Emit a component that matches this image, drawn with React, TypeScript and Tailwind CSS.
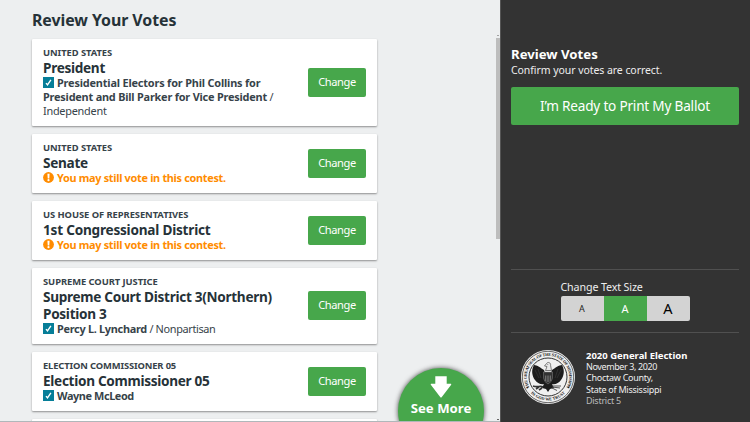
import type { ReactNode } from "react";

function ChangeButton() {
  return (
    <button className="h-[29px] w-[58px] shrink-0 rounded-[2px] bg-[#47a74b] pb-px text-[11.1px] leading-[28px] tracking-[-0.4px] text-white">
      Change
    </button>
  );
}

function Check() {
  return (
    <svg viewBox="0 0 11 11" className="mr-[3px] inline-block h-[11px] w-[11px] align-[-1px]">
      <rect width="11" height="11" fill="#067e98" />
      <path d="M3 6.1 L4.5 7.8 L7.9 2.9" fill="none" stroke="white" strokeWidth="1.4" />
    </svg>
  );
}

function Warning() {
  return (
    <svg viewBox="0 0 11 11" className="mr-[3px] inline-block h-[11px] w-[11px] align-[-1px]">
      <circle cx="5.5" cy="5.5" r="5.4" fill="#ff8c00" />
      <path d="M4.4 1.8h2.2l-.3 4.6h-1.6z" fill="white" />
      <circle cx="5.5" cy="8.2" r="1.1" fill="white" />
    </svg>
  );
}

function Card({ label, title, children }: { label: ReactNode; title: ReactNode; children: ReactNode }) {
  return (
    <section className="flex w-[345px] shrink-0 items-center justify-between rounded-[1px] bg-white pr-[11px] pb-2 pl-[11px] pt-[7px] shadow-[0_1px_2px_rgba(0,0,0,0.4)]">
      <div className="whitespace-nowrap text-[#263238]">
        <div className="text-[9.4px] font-bold leading-[13px] tracking-[-0.06px] text-[#37434a]">{label}</div>
        <h2 className="text-[13.6px] font-bold leading-[17px] tracking-[-0.3px]">{title}</h2>
        <div className="text-[10.9px] leading-[14px] tracking-[-0.25px] text-[#37434a]">{children}</div>
      </div>
      <ChangeButton />
    </section>
  );
}

function Undervote() {
  return (
    <div className="font-bold tracking-[-0.31px] text-[#ff8c00]">
      <Warning />
      You may still vote in this contest.
    </div>
  );
}

function Seal() {
  return (
    <svg viewBox="0 0 54 54" className="h-[54px] w-[54px] shrink-0">
      <defs>
        <path id="seal-top" d="M9.1 38.4 A21.2 21.2 0 1 1 44.9 38.4" />
        <path id="seal-bottom" d="M8.5 41.5 A23.5 23.5 0 0 0 45.5 41.5" />
      </defs>
      <circle cx="27" cy="27" r="27" fill="#f0f0f0" />
      <circle cx="27" cy="27" r="25.7" fill="none" stroke="#444" strokeWidth=".8" />
      <circle cx="27" cy="27" r="19" fill="none" stroke="#333" strokeWidth="1" />
      <text fontSize="4.2" fontWeight="700" fill="#111" fontFamily="Liberation Serif, serif">
        <textPath href="#seal-top" textLength="88" startOffset="1">THE GREAT SEAL OF THE STATE OF MISSISSIPPI</textPath>
      </text>
      <text fontSize="4.2" fontWeight="700" fill="#111" fontFamily="Liberation Serif, serif">
        <textPath href="#seal-bottom" startOffset="50%" textAnchor="middle">IN GOD WE TRUST</textPath>
      </text>
      <circle cx="6.6" cy="37.5" r=".8" fill="#222" />
      <circle cx="47.4" cy="37.5" r=".8" fill="#222" />
      <path d="M23 20 C20 18 16 15 13 15 C10 20 11 26 14 30 C16 33 20 35 23 34 L21 38 L25 39 L27 42 L29 39 L33 38 L31 34 C34 35 38 33 40 30 C43 26 44 20 41 15 C38 15 34 18 31 20 L30 23 H24 Z" fill="#1d1d1d" />
      <path d="M25.5 13.5 C27 11.5 30 12.5 29.6 15.5 L30.5 20.5 H24.5 L26 16.5 L23.5 16 Z" fill="#e8e8e8" stroke="#333" strokeWidth=".6" />
      <circle cx="26.8" cy="14.4" r=".45" fill="#222" />
      <path d="M22.5 22 H31.5 V28 Q31 32 27 34 Q23 32 22.5 28 Z" fill="#333" stroke="#888" strokeWidth=".5" />
      <path d="M24.5 25.5 V31 M26.2 25.5 V32 M27.8 25.5 V32 M29.5 25.5 V31" stroke="#999" strokeWidth=".6" />
      <path d="M14 20 L18 28 M17 19 L20 28 M40 20 L36 28 M37 19 L34 28" stroke="#444" strokeWidth=".5" />
      <path d="M22 37 C19 35 17 38 12 36 M18 37 L15 39 M21 38 L18 40" fill="none" stroke="#333" strokeWidth="1.6" />
      <path d="M31 37 L39 38 M32 36 L40 36 M31 38 L36 40.5" fill="none" stroke="#444" strokeWidth=".9" />
    </svg>
  );
}

export default function App() {
  return (
    <div className="flex h-[422px] w-[750px] overflow-hidden bg-[#edeff0] font-['Noto_Sans',sans-serif]">
      <main className="relative h-[422px] w-[500px] overflow-hidden border-b border-[#b0b7ba]">
        <div className="flex h-full">
          <div className="flex flex-1 flex-col pl-8">
            <h1 className="h-[39px] shrink-0 whitespace-nowrap pt-[10px] text-[15.9px] font-bold leading-5 tracking-[-0.05px] text-[#263238]">
              Review Your Votes
            </h1>
            <div className="flex flex-col gap-2">
              <Card label="UNITED STATES" title="President">
                <div className="font-bold tracking-[-0.17px]">
                  <Check />
                  Presidential Electors for Phil Collins for
                </div>
                <div>
                  <b className="tracking-[-0.2px]">President and Bill Parker for Vice President</b> /
                </div>
                <div>Independent</div>
              </Card>
              <Card label="UNITED STATES" title="Senate">
                <Undervote />
              </Card>
              <Card label="US HOUSE OF REPRESENTATIVES" title={<span className="tracking-[-0.22px]">1st Congressional District</span>}>
                <Undervote />
              </Card>
              <Card label="SUPREME COURT JUSTICE" title={<>Supreme Court District 3(Northern)<br />Position 3</>}>
                <Check />
                <b className="tracking-[-0.28px]">Percy L. Lynchard</b>
                <span className="tracking-[-0.35px]"> / Nonpartisan</span>
              </Card>
              <Card label={<span className="tracking-[-0.14px]">ELECTION COMMISSIONER 05</span>} title="Election Commissioner 05">
                <Check />
                <b className="tracking-[-0.4px]">Wayne McLeod</b>
              </Card>
              <section className="h-[59px] w-[345px] shrink-0 rounded-[1px] bg-white shadow-[0_1px_2px_rgba(0,0,0,0.4)]" />
            </div>
          </div>
          <div className="flex h-full w-1 flex-col items-center pt-[35px]">
            <div className="mb-[2px] h-px w-[2px] bg-[#a3a3a3]" />
            <div className="h-[201px] w-full bg-[#bdbdbd]" />
            <div className="mb-px mt-auto h-px w-[2px] bg-[#666]" />
          </div>
        </div>
        <button className="absolute left-[398px] top-[368px] flex h-[86px] w-[86px] flex-col items-center rounded-full bg-[#47a74b] pt-2 text-white shadow-[0_0_5px_rgba(0,0,0,0.7)]">
          <svg viewBox="0 0 22 22" className="h-[22px] w-[22px]">
            <path d="M5.3 .3h11.4V7.7h4q1.2 0 .3 1.2L11.8 21q-.8 1-1.6 0L1 8.9Q.1 7.7 1.3 7.7h4z" fill="white" />
          </svg>
          <span className="mt-[2px] whitespace-nowrap text-[13.2px] font-bold leading-[17px]">See More</span>
        </button>
      </main>
      <aside className="flex h-[422px] w-[250px] flex-col border-l border-[#555] bg-[#333] pl-[10px] pr-[11px] text-white">
        <div className="pt-[46px]">
          <h2 className="whitespace-nowrap text-[13.2px] font-bold leading-[17px]">Review Votes</h2>
          <p className="whitespace-nowrap text-[10.5px] leading-[14px] tracking-[-0.06px] text-[#eee]">Confirm your votes are correct.</p>
          <button className="mt-[10px] h-[38px] w-full whitespace-nowrap rounded-[2px] bg-[#47a74b] text-[13.6px] tracking-[-0.21px]">
            I’m Ready to Print My Ballot
          </button>
        </div>
        <div className="mt-auto flex h-[63px] flex-col items-center border-t border-[#505050] pt-[10px]">
          <div className="w-[129px]">
            <div className="whitespace-nowrap text-[10.7px] leading-[14px] tracking-[-0.13px] text-[#eee]">Change Text Size</div>
            <div className="mt-[2px] flex h-[25px] overflow-hidden rounded-[2px] bg-[#d3d3d3] text-center leading-[25px] text-[#222]">
              <button className="w-[43px] text-[9px]">A</button>
              <button className="w-[43px] bg-[#47a74b] text-[11px] text-white">A</button>
              <button className="w-[43px] text-[14.5px] text-black">A</button>
            </div>
          </div>
        </div>
        <div className="flex h-[90px] border-t border-[#505050] pl-[10px] pt-[17px]">
          <Seal />
          <div className="ml-[11px] whitespace-nowrap text-[9px] leading-[11.2px] tracking-[-0.26px] text-[#eee]">
            <div className="text-[9.5px] font-bold tracking-normal text-white">2020 General Election</div>
            <div className="tracking-[-0.4px]">November 3, 2020</div>
            <div>Choctaw County,</div>
            <div>State of Mississippi</div>
            <div className="text-[#bbb]">District 5</div>
          </div>
        </div>
      </aside>
    </div>
  );
}
